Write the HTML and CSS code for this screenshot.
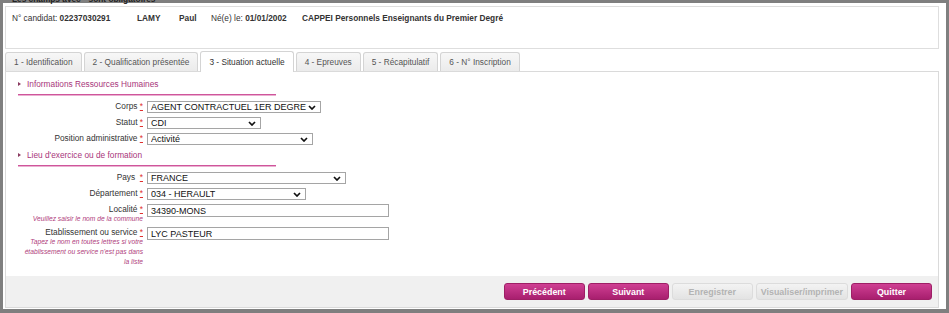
FILE: index.html
```html
<!DOCTYPE html>
<html lang="fr">

<head>
    <meta charset="UTF-8">
    <meta name="viewport" content="width=device-width, initial-scale=1.0">
    <title>Situation actuelle</title>

    <link rel="stylesheet" href="styles.css">
</head>

<body>

    <div class="frame">
        <p class="notice">Les champs avec * sont obligatoires</p>

        <div class="candidate">
            <span class="c-num">N° candidat: <b>02237030291</b></span>
            <b class="c-name">LAMY</b>
            <b class="c-first">Paul</b>
            <span class="c-birth">Né(e) le: <b>01/01/2002</b></span>
            <b>CAPPEI Personnels Enseignants du Premier Degré</b>
        </div>

        <ul class="tabs">
            <li class="tab">1 - Identification</li>
            <li class="tab">2 - Qualification présentée</li>
            <li class="tab active">3 - Situation actuelle</li>
            <li class="tab">4 - Epreuves</li>
            <li class="tab">5 - Récapitulatif</li>
            <li class="tab">6 - N° Inscription</li>
        </ul>

        <div class="panel">
            <div class="panel-body">
                <h2 class="section">Informations Ressources Humaines</h2>

                <div class="row">
                    <div class="label">Corps <span class="req">*</span></div>
                    <span class="select w-corps">
                        <select><option>AGENT CONTRACTUEL 1ER DEGRE</option></select>
                        <svg viewBox="0 0 8 5" width="8" height="5"><path d="M1 1 L4 4 L7 1" /></svg>
                    </span>
                </div>
                <div class="row">
                    <div class="label">Statut <span class="req">*</span></div>
                    <span class="select w-statut">
                        <select><option>CDI</option></select>
                        <svg viewBox="0 0 8 5" width="8" height="5"><path d="M1 1 L4 4 L7 1" /></svg>
                    </span>
                </div>
                <div class="row">
                    <div class="label">Position administrative <span class="req">*</span></div>
                    <span class="select w-position">
                        <select><option>Activité</option></select>
                        <svg viewBox="0 0 8 5" width="8" height="5"><path d="M1 1 L4 4 L7 1" /></svg>
                    </span>
                </div>

                <h2 class="section second">Lieu d'exercice ou de formation</h2>

                <div class="row">
                    <div class="label">Pays &nbsp;<span class="req">*</span></div>
                    <span class="select w-pays">
                        <select><option>FRANCE</option></select>
                        <svg viewBox="0 0 8 5" width="8" height="5"><path d="M1 1 L4 4 L7 1" /></svg>
                    </span>
                </div>
                <div class="row">
                    <div class="label">Département <span class="req">*</span></div>
                    <span class="select w-dept">
                        <select><option>034 - HERAULT</option></select>
                        <svg viewBox="0 0 8 5" width="8" height="5"><path d="M1 1 L4 4 L7 1" /></svg>
                    </span>
                </div>
                <div class="row row-tall">
                    <div class="label">
                        Localité <span class="req">*</span>
                        <div class="hint">Veuillez saisir le nom de la commune</div>
                    </div>
                    <input type="text" class="field" value="34390-MONS">
                </div>
                <div class="row">
                    <div class="label">
                        Etablissement ou service <span class="req">*</span>
                        <div class="hint">Tapez le nom en toutes lettres si votre<br>établissement ou service n'est pas dans<br>la liste</div>
                    </div>
                    <input type="text" class="field" value="LYC PASTEUR">
                </div>
            </div>

            <div class="actions">
                <button class="btn">Précédent</button>
                <button class="btn">Suivant</button>
                <button class="btn" disabled>Enregistrer</button>
                <button class="btn" disabled>Visualiser/imprimer</button>
                <button class="btn">Quitter</button>
            </div>
        </div>
    </div>

</body>

</html>
```

FILE: styles.css
```css
body {
    margin: 0;
    font-family: "Liberation Sans", Arial, sans-serif;
    font-size: 8.3px;
    color: #333;
}

.frame {
    box-sizing: border-box;
    width: 949px;
    height: 313px;
    border: solid #7f7f7f;
    border-width: 3px 3px 4px 3px;
    padding: 3px 7px 0 2px;
    background: #fff;
}

.notice {
    margin: -11px 0 0 7px;
    height: 11px;
    line-height: 9px;
    font-weight: bold;
    color: #222;
}

/* candidate banner */
.candidate {
    display: flex;
    box-sizing: border-box;
    height: 43px;
    padding: 6px 6px 0;
    border: 1px solid #dedede;
    line-height: 10px;
}

.c-num {
    width: 125px;
}

.c-name {
    width: 42px;
}

.c-first {
    width: 32px;
}

.c-birth {
    width: 91px;
}

/* tabs */
.tabs {
    display: flex;
    align-items: flex-end;
    gap: 2px;
    height: 20px;
    margin: 2px 0 0;
    padding: 0;
    list-style: none;
}

.tab {
    box-sizing: border-box;
    height: 19px;
    padding: 0 8px;
    border: 1px solid #d4d4d4;
    border-bottom: 0;
    border-radius: 3px 3px 0 0;
    background: linear-gradient(#f7f7f7, #ebebeb);
    line-height: 18px;
    color: #555;
}

.tab.active {
    position: relative;
    z-index: 1;
    height: 21px;
    margin-bottom: -1px;
    background: #fff;
    line-height: 20px;
    color: #333;
}

/* panel */
.panel {
    display: flex;
    flex-direction: column;
    box-sizing: border-box;
    height: 237px;
    border: 1px solid #dadada;
}

.panel-body {
    flex: 1;
    padding: 6px 0 0 12px;
}

.section {
    display: flex;
    align-items: center;
    width: 258px;
    margin: 0 0 6px;
    padding-bottom: 4px;
    border-bottom: 1px solid #cf559b;
    box-shadow: 0 1px 0 #eab0d1;
    font-size: 8.3px;
    font-weight: normal;
    line-height: 12px;
    color: #a8357a;
}

.section::before {
    content: "";
    width: 0;
    height: 0;
    margin-right: 6px;
    border-left: 3px solid #8a3a60;
    border-top: 2.5px solid transparent;
    border-bottom: 2.5px solid transparent;
}

.section.second {
    margin-top: 4px;
}

.row {
    display: flex;
    align-items: flex-start;
    margin-bottom: 4px;
}

.row-tall {
    margin-bottom: 3px;
}

.label {
    width: 125px;
    margin-right: 4px;
    text-align: right;
    line-height: 10px;
    color: #333;
}

.req {
    color: #e0302f;
    text-decoration: underline;
}

.hint {
    font-size: 6.7px;
    font-style: italic;
    line-height: 10px;
    color: #b0407c;
}

/* selects and text fields */
.select {
    position: relative;
    display: inline-flex;
    height: 12px;
}

.select select {
    box-sizing: border-box;
    width: 100%;
    height: 12px;
    margin: 0;
    padding: 0 0 0 3px;
    border: 1px solid #a5a5a5;
    border-radius: 0;
    background: #fff;
    appearance: none;
    font-family: "Liberation Sans", Arial, sans-serif;
    font-size: 9px;
    color: #111;
    outline: none;
}

.select svg {
    position: absolute;
    right: 5px;
    top: 4px;
    fill: none;
    stroke: #111;
    stroke-width: 1.7;
}

.w-corps {
    width: 174px;
}

.w-statut {
    width: 114px;
}

.w-position {
    width: 166px;
}

.w-pays {
    width: 199px;
}

.w-dept {
    width: 159px;
}

.field {
    box-sizing: border-box;
    width: 242px;
    height: 13px;
    margin: 0;
    padding: 0 3px;
    border: 1px solid #a5a5a5;
    font-family: "Liberation Sans", Arial, sans-serif;
    font-size: 9px;
    color: #111;
    outline: none;
}

/* footer buttons */
.actions {
    display: flex;
    justify-content: flex-end;
    gap: 3px;
    box-sizing: border-box;
    height: 31px;
    padding: 7px 6px 0 0;
    background: #f0f0f0;
}

.btn {
    box-sizing: border-box;
    min-width: 81px;
    height: 17px;
    padding: 0 4px;
    border: 1px solid #9e1f66;
    border-radius: 3px;
    background: linear-gradient(#cf3f93, #a81f6e);
    font-family: "Liberation Sans", Arial, sans-serif;
    font-size: 8.9px;
    font-weight: bold;
    color: #fff;
}

.btn:disabled {
    border-color: #dcdcdc;
    background: linear-gradient(#f3f3f3, #e3e3e3);
    color: #b3b3b3;
}
```
